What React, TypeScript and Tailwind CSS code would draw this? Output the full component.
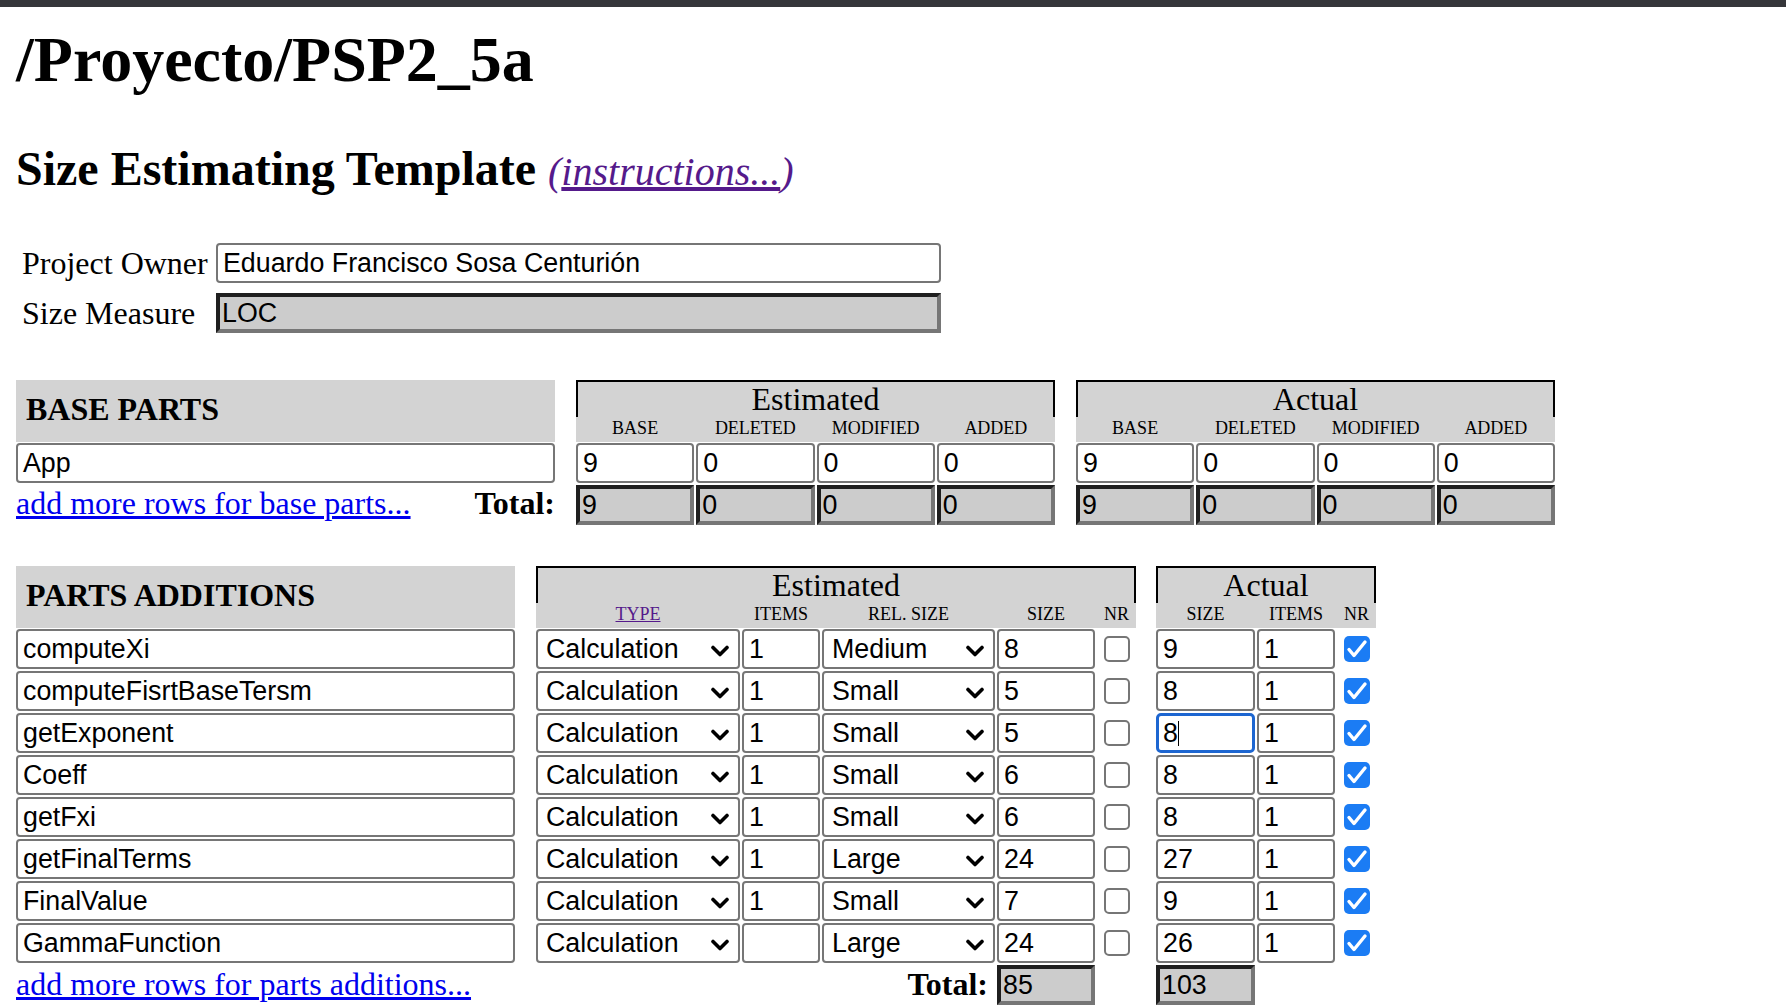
import React from "react";

const SANS = "font-['Liberation_Sans',Arial,sans-serif] text-[26.8px] text-black";

function TextBox({ value, className = "" }: { value: string; className?: string }) {
  return (
    <div
      className={`h-[40px] border-2 border-[#767676] rounded-[4px] bg-white pl-[5px] flex items-center overflow-hidden whitespace-nowrap ${SANS} ${className}`}
    >
      {value}
    </div>
  );
}

function FocusBox({ value }: { value: string }) {
  return (
    <div
      className={`h-[40px] border-[3px] border-[#1d66d1] rounded-[5px] bg-white pl-[4px] flex items-center overflow-hidden whitespace-nowrap ${SANS}`}
    >
      <span>{value}</span>
      <span className="w-[1px] h-[25px] bg-black" />
    </div>
  );
}

function InsetBox({ value, className = "" }: { value: string; className?: string }) {
  return (
    <div
      className={`h-[40px] border-4 border-t-[#1f1f1f] border-l-[#1f1f1f] border-b-[#767676] border-r-[#767676] bg-[#cccccc] pl-[2px] flex items-center overflow-hidden whitespace-nowrap ${SANS} ${className}`}
    >
      {value}
    </div>
  );
}

function SelectBox({ value }: { value: string }) {
  return (
    <div
      className={`h-[40px] border-2 border-[#767676] rounded-[4px] bg-white pl-[8px] pr-[9px] flex items-center justify-between whitespace-nowrap ${SANS}`}
    >
      <span>{value}</span>
      <svg width="18" height="12" viewBox="0 0 18 12" className="mt-[3px]">
        <path
          d="M2 2.5 L9 9.5 L16 2.5"
          stroke="black"
          strokeWidth="3.6"
          fill="none"
          strokeLinecap="round"
          strokeLinejoin="round"
        />
      </svg>
    </div>
  );
}

function CheckBox({ checked }: { checked: boolean }) {
  return (
    <div className="h-[40px] flex items-center justify-center">
      {checked ? (
        <div className="w-[26px] h-[26px] rounded-[5px] bg-[#1b7cf4] flex items-center justify-center">
          <svg width="26" height="26" viewBox="0 0 26 26">
            <path
              d="M5 13.5 L10 19.5 L21 6"
              stroke="white"
              strokeWidth="3.4"
              fill="none"
              strokeLinecap="round"
              strokeLinejoin="round"
            />
          </svg>
        </div>
      ) : (
        <div className="w-[26px] h-[26px] rounded-[5px] border-2 border-[#767676] bg-white" />
      )}
    </div>
  );
}

const parts = [
  { name: "computeXi", items: "1", rel: "Medium", size: "8", aSize: "9", aItems: "1", focus: false },
  { name: "computeFisrtBaseTersm", items: "1", rel: "Small", size: "5", aSize: "8", aItems: "1", focus: false },
  { name: "getExponent", items: "1", rel: "Small", size: "5", aSize: "8", aItems: "1", focus: true },
  { name: "Coeff", items: "1", rel: "Small", size: "6", aSize: "8", aItems: "1", focus: false },
  { name: "getFxi", items: "1", rel: "Small", size: "6", aSize: "8", aItems: "1", focus: false },
  { name: "getFinalTerms", items: "1", rel: "Large", size: "24", aSize: "27", aItems: "1", focus: false },
  { name: "FinalValue", items: "1", rel: "Small", size: "7", aSize: "9", aItems: "1", focus: false },
  { name: "GammaFunction", items: "", rel: "Large", size: "24", aSize: "26", aItems: "1", focus: false },
];

function BaseTable({ title, values, totals }: { title: string; values: string[]; totals: string[] }) {
  const labels = ["BASE", "DELETED", "MODIFIED", "ADDED"];
  return (
    <div className="w-[479px] ml-[21px] flex flex-col">
      <div className="h-[37px] border-2 border-b-0 border-black bg-[#d3d3d3] text-center text-[32px] leading-[34px]">
        {title}
      </div>
      <div className="h-[25px] bg-[#d3d3d3] grid grid-cols-4 gap-x-[2px] text-[18px] leading-[22px] text-center">
        {labels.map((l) => (
          <div key={l}>{l}</div>
        ))}
      </div>
      <div className="mt-[1px] grid grid-cols-4 gap-x-[2px]">
        {values.map((v, i) => (
          <TextBox key={i} value={v} />
        ))}
      </div>
      <div className="mt-[2px] grid grid-cols-4 gap-x-[2px]">
        {totals.map((v, i) => (
          <InsetBox key={i} value={v} />
        ))}
      </div>
    </div>
  );
}

export default function App() {
  return (
    <div className="min-h-screen bg-white text-black font-['Liberation_Serif',serif]">
      <div className="h-[7px] bg-[#35363a]" />
      <div className="pl-[16px]">
        <h1 className="mt-[16px] text-[64px] leading-[74px] font-bold">/Proyecto/PSP2_5a</h1>
        <h2 className="mt-[44px] text-[48px] leading-[56px] font-bold whitespace-nowrap">
          Size Estimating Template{" "}
          <span className="text-[40px] italic font-normal text-[#551a8b]">
            (<a className="underline">instructions...</a>)
          </span>
        </h2>

        <div className="mt-[43px] flex flex-col gap-[10px]">
          <div className="flex items-center h-[40px]">
            <div className="w-[200px] pl-[6px] text-[32px] leading-[36px]">Project Owner</div>
            <TextBox value="Eduardo Francisco Sosa Centurión" className="w-[725px]" />
          </div>
          <div className="flex items-center h-[40px]">
            <div className="w-[200px] pl-[6px] text-[32px] leading-[36px]">Size Measure</div>
            <InsetBox value="LOC" className="w-[725px]" />
          </div>
        </div>

        {/* BASE PARTS */}
        <div className="mt-[47px] flex items-start">
          <div className="w-[539px] flex flex-col">
            <div className="h-[62px] bg-[#d3d3d3] flex items-center pl-[10px] pb-[4px] text-[32px] font-bold">
              BASE PARTS
            </div>
            <TextBox value="App" className="mt-[1px]" />
            <div className="mt-[2px] h-[40px] flex items-center justify-between pb-[4px] text-[32px]">
              <a className="text-[#0000ee] underline">add more rows for base parts...</a>
              <span className="font-bold">Total:</span>
            </div>
          </div>
          <BaseTable title="Estimated" values={["9", "0", "0", "0"]} totals={["9", "0", "0", "0"]} />
          <BaseTable title="Actual" values={["9", "0", "0", "0"]} totals={["9", "0", "0", "0"]} />
        </div>

        {/* PARTS ADDITIONS */}
        <div className="mt-[41px] flex items-start">
          <div className="w-[499px] flex flex-col">
            <div className="h-[62px] bg-[#d3d3d3] flex items-center pl-[10px] pb-[4px] text-[32px] font-bold">
              PARTS ADDITIONS
            </div>
            <div className="mt-[1px] flex flex-col gap-y-[2px]">
              {parts.map((p) => (
                <TextBox key={p.name} value={p.name} />
              ))}
            </div>
            <div className="mt-[2px] h-[40px] flex items-center pb-[2px] text-[32px]">
              <a className="text-[#0000ee] underline">add more rows for parts additions...</a>
            </div>
          </div>

          <div className="w-[600px] ml-[21px] flex flex-col">
            <div className="h-[37px] border-2 border-b-0 border-black bg-[#d3d3d3] text-center text-[32px] leading-[34px]">
              Estimated
            </div>
            <div className="h-[25px] bg-[#d3d3d3] grid grid-cols-[204px_78px_173px_98px_39px] gap-x-[2px] text-[18px] leading-[22px] text-center">
              <div>
                <a className="text-[#551a8b] underline">TYPE</a>
              </div>
              <div>ITEMS</div>
              <div>REL. SIZE</div>
              <div>SIZE</div>
              <div>NR</div>
            </div>
            <div className="mt-[1px] grid grid-cols-[204px_78px_173px_98px_39px] gap-x-[2px] gap-y-[2px]">
              {parts.map((p) => (
                <React.Fragment key={p.name}>
                  <SelectBox value="Calculation" />
                  <TextBox value={p.items} />
                  <SelectBox value={p.rel} />
                  <TextBox value={p.size} />
                  <CheckBox checked={false} />
                </React.Fragment>
              ))}
            </div>
            <div className="mt-[2px] grid grid-cols-[204px_78px_173px_98px_39px] gap-x-[2px]">
              <div className="col-span-3 h-[40px] flex items-center justify-end pr-[7px] pb-[2px] text-[32px] font-bold">
                Total:
              </div>
              <InsetBox value="85" />
            </div>
          </div>

          <div className="w-[220px] ml-[20px] flex flex-col">
            <div className="h-[37px] border-2 border-b-0 border-black bg-[#d3d3d3] text-center text-[32px] leading-[34px]">
              Actual
            </div>
            <div className="h-[25px] bg-[#d3d3d3] grid grid-cols-[99px_78px_39px] gap-x-[2px] text-[18px] leading-[22px] text-center">
              <div>SIZE</div>
              <div>ITEMS</div>
              <div>NR</div>
            </div>
            <div className="mt-[1px] grid grid-cols-[99px_78px_39px] gap-x-[2px] gap-y-[2px]">
              {parts.map((p) => (
                <React.Fragment key={p.name}>
                  {p.focus ? <FocusBox value={p.aSize} /> : <TextBox value={p.aSize} />}
                  <TextBox value={p.aItems} />
                  <CheckBox checked={true} />
                </React.Fragment>
              ))}
            </div>
            <div className="mt-[2px] grid grid-cols-[99px_78px_39px] gap-x-[2px]">
              <InsetBox value="103" />
            </div>
          </div>
        </div>
      </div>
    </div>
  );
}
